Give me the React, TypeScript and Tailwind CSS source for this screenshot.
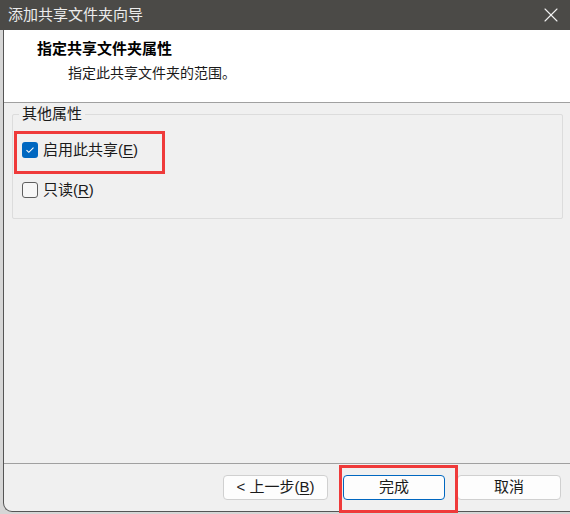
import { X } from "lucide-react"

const font = { fontFamily: '"Liberation Sans", "Noto Sans CJK SC", sans-serif' }

function Checkbox({ checked }: { checked?: boolean }) {
    if (checked) {
        return (
            <span className="flex h-[16px] w-[16px] items-center justify-center rounded-[3px] bg-[#0067c0]">
                <svg width="10" height="8" viewBox="0 0 10 8" fill="none">
                    <path d="M1.5 4.2 L3.8 6.3 L8.5 1.6" stroke="white" strokeWidth="1.1" />
                </svg>
            </span>
        )
    }
    return <span className="h-[16px] w-[16px] rounded-[3px] border border-[#5f5f5f] bg-[#f7f7f7]" />
}

function Option({
    label,
    hotkey,
    checked
}: {
    label: string
    hotkey: string
    checked?: boolean
}) {
    return (
        <div className="flex h-[16px] items-center gap-[5px] pl-[9px]">
            <Checkbox checked={checked} />
            <span className="text-[15px] leading-[16px] text-[#1a1a1a]">
                {label}(<span className="underline underline-offset-2">{hotkey}</span>)
            </span>
        </div>
    )
}

function Button({
    children,
    width,
    primary
}: {
    children: React.ReactNode
    width: string
    primary?: boolean
}) {
    const border = primary ? "border-[#0067c0]" : "border-[#d0d0d0]"
    return (
        <div
            className={`flex h-[25px] items-center justify-center rounded-[4px] border bg-[#fdfdfd] text-[15px] text-[#1a1a1a] ${border} ${width}`}>
            {children}
        </div>
    )
}

export default function App() {
    return (
        <div
            className="relative h-[514px] w-[570px] overflow-hidden bg-[#d6d6d6]"
            style={font}>
            {/* title bar */}
            <div className="flex h-[30px] items-center justify-between bg-[#4b4a47] pl-[8px] pr-[7px]">
                <span className="text-[15px] text-[#ececec]">添加共享文件夹向导</span>
                <X size={24} strokeWidth={1.1} className="text-[#f2f2f2]" />
            </div>

            <div className="ml-[3px] flex h-[482px] flex-col rounded-bl-[9px] border-b border-l border-[#555] bg-[#f0f0f0]">
                {/* header */}
                <div className="h-[73px] border-b border-[#a0a0a0] bg-white pl-[33px] pt-[10px]">
                    <div className="text-[15px] font-bold leading-[18px] text-black">
                        指定共享文件夹属性
                    </div>
                    <div className="mt-[6px] pl-[31px] text-[14px] leading-[18px] text-[#1a1a1a]">
                        指定此共享文件夹的范围。
                    </div>
                </div>

                {/* body */}
                <div className="flex-1 pl-[8px] pr-[7px] pt-[11px]">
                    <div className="relative flex h-[105px] flex-col gap-[24px] rounded-[2px] border border-[#dcdcdc] pt-[27px]">
                        <span className="absolute left-[6px] top-[-10px] bg-[#f0f0f0] px-[3px] text-[15px] leading-[18px] text-[#1a1a1a]">
                            其他属性
                        </span>
                        <Option label="启用此共享" hotkey="E" checked />
                        <Option label="只读" hotkey="R" />
                    </div>
                </div>

                {/* footer */}
                <div className="flex h-[48px] justify-end gap-[12px] border-t border-[#a0a0a0] pr-[9px] pt-[11px]">
                    <div className="mr-[3px]">
                        <Button width="w-[105px]">
                            &lt; 上一步(<span className="underline underline-offset-2">B</span>)
                        </Button>
                    </div>
                    <Button width="w-[102px]" primary>
                        完成
                    </Button>
                    <Button width="w-[104px]">取消</Button>
                </div>
            </div>

            {/* red annotation boxes */}
            <div className="absolute left-[14px] top-[131px] h-[43px] w-[151px] border-[3px] border-[#ef3a3a]" />
            <div className="absolute left-[339px] top-[465px] h-[48px] w-[119px] border-[3px] border-[#ef3a3a]" />
        </div>
    )
}
